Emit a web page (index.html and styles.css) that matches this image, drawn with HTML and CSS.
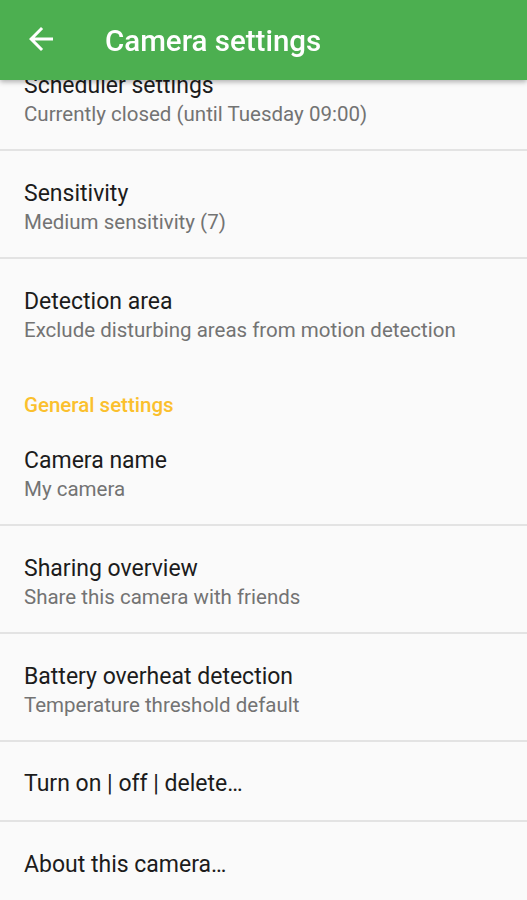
FILE: index.html
```html
<!DOCTYPE html>
<html>
<head>
	<title>Camera settings</title>
	<meta charset="utf-8">
	<link rel="stylesheet" href="styles.css">
</head>
<body>
	<header class="appbar">
		<span class="back">
			<svg viewBox="0 0 24 24" width="36" height="36"><path d="M20 11H7.83l5.59-5.59L12 4l-8 8 8 8 1.41-1.41L7.83 13H20v-2z" fill="#fff"/></svg>
		</span>
		<h1 class="title">Camera settings</h1>
	</header>

	<ul class="prefs">
		<li class="pref">
			<span class="pref-title">Scheduler settings</span>
			<span class="pref-summary">Currently closed (until Tuesday 09:00)</span>
		</li>
		<li class="pref">
			<span class="pref-title">Sensitivity</span>
			<span class="pref-summary">Medium sensitivity (7)</span>
		</li>
		<li class="pref last">
			<span class="pref-title">Detection area</span>
			<span class="pref-summary">Exclude disturbing areas from motion detection</span>
		</li>
		<li class="category">General settings</li>
		<li class="pref">
			<span class="pref-title">Camera name</span>
			<span class="pref-summary">My camera</span>
		</li>
		<li class="pref">
			<span class="pref-title">Sharing overview</span>
			<span class="pref-summary">Share this camera with friends</span>
		</li>
		<li class="pref">
			<span class="pref-title">Battery overheat detection</span>
			<span class="pref-summary">Temperature threshold default</span>
		</li>
		<li class="pref single">
			<span class="pref-title">Turn on | off | delete…</span>
		</li>
		<li class="pref single last">
			<span class="pref-title">About this camera…</span>
		</li>
	</ul>
</body>
</html>
```

FILE: styles.css
```css
body {
	margin: 0;
	font-family: Roboto, "Noto Sans", sans-serif;
	background-color: #fafafa;
	color: #1c1c1c;
}
.appbar {
	position: fixed;
	top: 0;
	left: 0;
	right: 0;
	height: 80px;
	display: flex;
	align-items: center;
	background-color: #4caf50;
	box-shadow: 0 2px 5px rgba(0, 0, 0, 0.3);
	z-index: 2;
}
.back {
	display: flex;
	width: 36px;
	height: 36px;
	margin-left: 23px;
	margin-top: -2px;
}
.title {
	margin: 2px 0 0 46px;
	font-size: 29.5px;
	font-weight: 500;
	color: #fff;
}
.prefs {
	list-style: none;
	margin: 0;
	padding: 43px 0 0;
}
.pref {
	display: flex;
	flex-direction: column;
	justify-content: center;
	height: 106px;
	padding: 0 24px;
	border-bottom: 2px solid #e3e3e3;
}
.pref.single {
	box-sizing: border-box;
	height: 80px;
	padding-top: 5px;
}
.pref.last {
	border-bottom: none;
}
.pref-title {
	font-size: 23px;
	line-height: 36px;
	color: #1c1c1c;
}
.pref-summary {
	font-size: 20.5px;
	line-height: 21px;
	color: #737373;
}
.category {
	box-sizing: border-box;
	height: 53px;
	padding: 25px 24px 0;
	font-size: 20.5px;
	font-weight: 500;
	line-height: 30px;
	color: #fbc02d;
}
```
